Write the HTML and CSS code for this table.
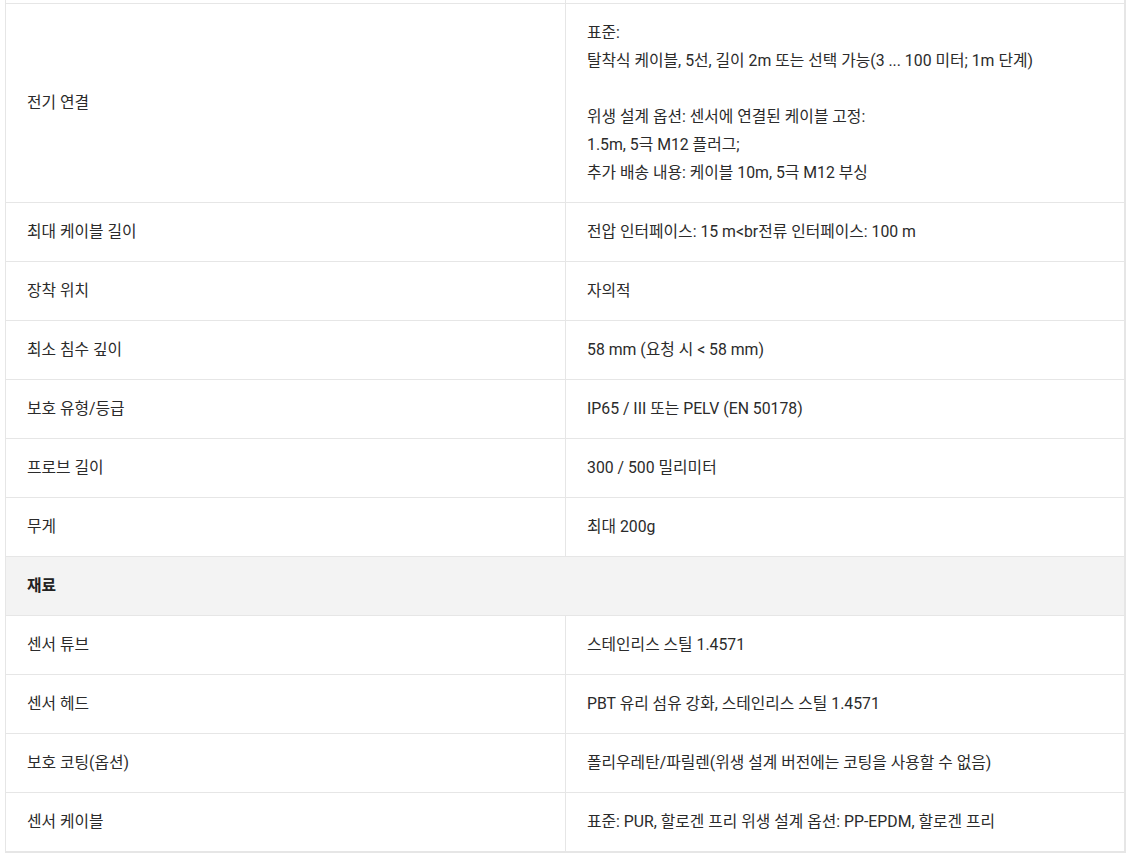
FILE: index.html
```html
<!DOCTYPE html>
<html lang="ko">
<head>
  <meta charset="UTF-8">
  <meta name="viewport" content="width=device-width, initial-scale=1">
  <title>기술 사양</title>
  <link rel="stylesheet" href="styles.css">
</head>

<body>

  <div class="specs">
    <table class="spec-table">
      <colgroup>
        <col class="col-label">
        <col class="col-value">
      </colgroup>
      <tbody>
        <tr class="cut-row">
          <td></td>
          <td></td>
        </tr>
        <tr>
          <td>전기 연결</td>
          <td>
            표준:<br>
            탈착식 케이블, 5선, 길이 2m 또는 선택 가능(3 ... 100 미터; 1m 단계)<br>
            <br>
            위생 설계 옵션: 센서에 연결된 케이블 고정:<br>
            1.5m, 5극 M12 플러그;<br>
            추가 배송 내용: 케이블 10m, 5극 M12 부싱
          </td>
        </tr>
        <tr>
          <td>최대 케이블 길이</td>
          <td>전압 인터페이스: 15 m&lt;br전류 인터페이스: 100 m</td>
        </tr>
        <tr>
          <td>장착 위치</td>
          <td>자의적</td>
        </tr>
        <tr>
          <td>최소 침수 깊이</td>
          <td>58 mm (요청 시 &lt; 58 mm)</td>
        </tr>
        <tr>
          <td>보호 유형/등급</td>
          <td>IP65 / III 또는 PELV (EN 50178)</td>
        </tr>
        <tr>
          <td>프로브 길이</td>
          <td>300 / 500 밀리미터</td>
        </tr>
        <tr>
          <td>무게</td>
          <td>최대 200g</td>
        </tr>
        <tr class="group-row">
          <td colspan="2">재료</td>
        </tr>
        <tr>
          <td>센서 튜브</td>
          <td>스테인리스 스틸 1.4571</td>
        </tr>
        <tr>
          <td>센서 헤드</td>
          <td>PBT 유리 섬유 강화, 스테인리스 스틸 1.4571</td>
        </tr>
        <tr>
          <td>보호 코팅(옵션)</td>
          <td>폴리우레탄/파릴렌(위생 설계 버전에는 코팅을 사용할 수 없음)</td>
        </tr>
        <tr>
          <td>센서 케이블</td>
          <td>표준: PUR, 할로겐 프리 위생 설계 옵션: PP-EPDM, 할로겐 프리</td>
        </tr>
      </tbody>
    </table>
  </div>

</body>
</html>
```

FILE: styles.css
```css
* {
  margin: 0;
  padding: 0;
  box-sizing: border-box;
}

body {
  background: #fff;
  color: #2b2b2b;
  font-family: Roboto, "Noto Sans CJK KR", sans-serif;
  font-size: 15.8px;
}

.specs {
  padding: 0 5px;
}

.spec-table {
  width: 1121px;
  border-collapse: collapse;
  table-layout: fixed;
  border-right: 2px solid #e6e6e6;
  border-bottom: 2px solid #e6e6e6;
}

.col-label {
  width: 560px;
}

.spec-table td {
  border: 1px solid #e6e6e6;
  padding: 15px 21px;
  line-height: 28px;
  vertical-align: middle;
  text-align: left;
}

.spec-table .cut-row td {
  height: 3px;
  padding: 0;
  border-top: none;
}

.group-row td {
  background: #f3f3f3;
  font-weight: bold;
  color: #222;
}
```
